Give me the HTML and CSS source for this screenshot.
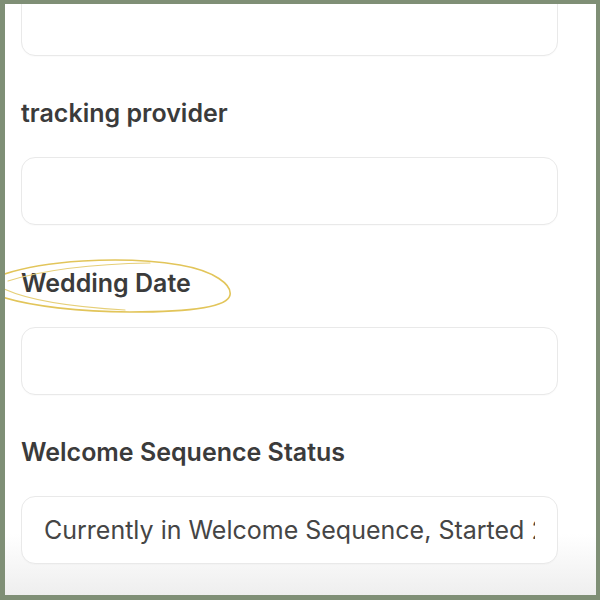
FILE: index.html
```html
<!DOCTYPE html>
<html>
<head>
<meta charset="utf-8">
<link rel="stylesheet" href="styles.css">
</head>
<body>
<div class="frame">
  <div class="page">
    <div class="form">
      <input class="field field-first" type="text" readonly value="">
      <div class="label">tracking provider</div>
      <input class="field" type="text" readonly value="">
      <div class="label label-marked">Wedding Date
        <svg class="scribble" width="240" height="70" viewBox="0 0 240 70" aria-hidden="true">
          <path d="M2 24 C40 10 120 4 180 14 C215 20 232 34 230 44 C228 56 190 61 130 61 C80 61 30 55 2 46" fill="none" stroke="#e2c55a" stroke-width="1.6" stroke-linecap="round"/>
          <path d="M8 30 C40 20 90 13 150 12" fill="none" stroke="#e6cf78" stroke-width="1.2" stroke-linecap="round"/>
          <path d="M4 38 C30 50 70 56 125 59" fill="none" stroke="#e6cf78" stroke-width="1.2" stroke-linecap="round"/>
        </svg>
      </div>
      <input class="field" type="text" readonly value="">
      <div class="label">Welcome Sequence Status</div>
      <input class="field field-text" type="text" readonly value="Currently in Welcome Sequence, Started 2024-01-12">
    </div>
  </div>
</div>
</body>
</html>
```

FILE: styles.css
```css
html, body {
  margin: 0;
  padding: 0;
}
body {
  background: #7f8f76;
  width: 600px;
  height: 600px;
  overflow: hidden;
}
.frame {
  padding: 4px 4px 5px 5px;
  box-sizing: border-box;
  width: 600px;
  height: 600px;
}
.page {
  width: 591px;
  height: 591px;
  background: linear-gradient(to bottom, #ffffff 0, #ffffff 530px, #eeeeee 591px);
  overflow: hidden;
  position: relative;
}
.form {
  display: flex;
  flex-direction: column;
  padding-left: 16px;
  margin-top: -16.5px;
  font-family: Inter, "Noto Sans", sans-serif;
}
.field {
  display: block;
  box-sizing: border-box;
  width: 537px;
  height: 68px;
  margin: 0;
  border: 1px solid #e9e9e9;
  border-radius: 14px;
  background: #ffffff;
  padding: 0 22px 0 22px;
  font-family: Inter, "Noto Sans", sans-serif;
  font-size: 25px;
  font-weight: 400;
  color: #454545;
  outline: none;
  box-shadow: 0 1px 1px rgba(0,0,0,0.02);
}
.label {
  margin-top: 42.5px;
  margin-bottom: 29px;
  height: 30px;
  line-height: 30px;
  font-size: 25px;
  font-weight: 600;
  color: #3b3b3b;
}
.label-marked {
  position: relative;
}
.scribble {
  position: absolute;
  left: -21px;
  top: -17px;
  pointer-events: none;
}
```
